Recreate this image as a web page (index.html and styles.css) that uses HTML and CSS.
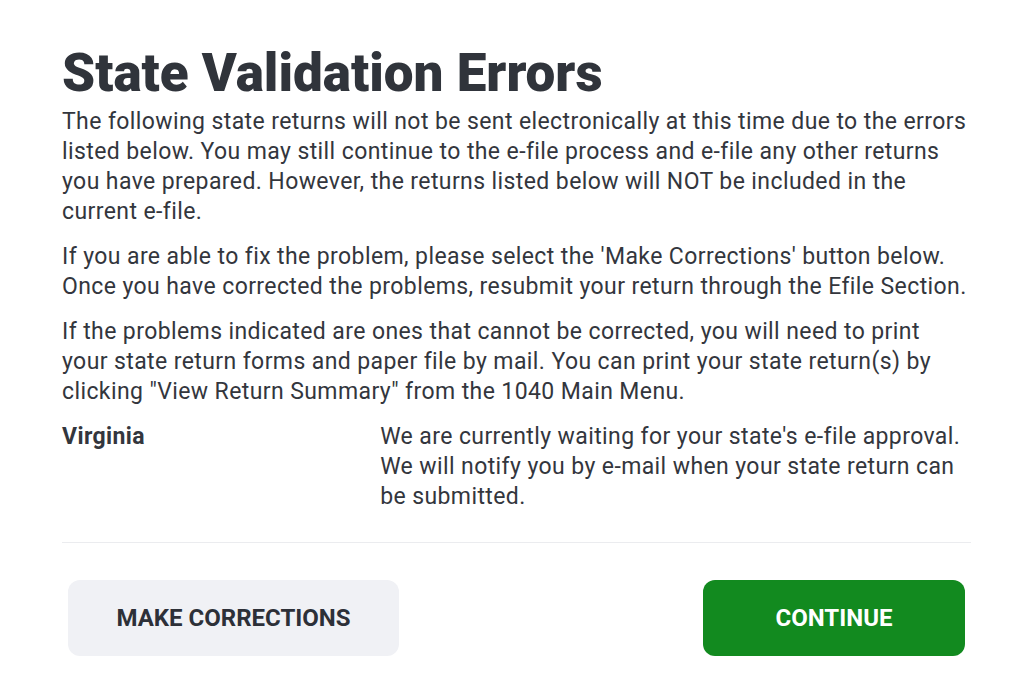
FILE: index.html
```html
<!DOCTYPE html>
<html lang="en">
<head>
    <meta charset="UTF-8">
    <meta name="viewport" content="width=device-width, initial-scale=1.0">
    <title>State Validation Errors</title>
    <link rel="stylesheet" href="styles.css">
</head>
<body>

    <div class="dialog">
        <h1 class="dialog-title">State Validation Errors</h1>

        <p>The following state returns will not be sent electronically at this time due to the errors listed below. You may still continue to the e-file process and e-file any other returns you have prepared. However, the returns listed below will NOT be included in the current e-file.</p>

        <p>If you are able to fix the problem, please select the 'Make Corrections' button below. Once you have corrected the problems, resubmit your return through the Efile Section.</p>

        <p>If the problems indicated are ones that cannot be corrected, you will need to print your state return forms and paper file by mail. You can print your state return(s) by clicking "View Return Summary" from the 1040 Main Menu.</p>

        <div class="state-list">
            <div class="state-name">Virginia</div>
            <div class="state-msg">We are currently waiting for your state's e-file approval. We will notify you by e-mail when your state return can be submitted.</div>
        </div>

        <div class="dialog-actions">
            <button class="btn btn-secondary">Make Corrections</button>
            <button class="btn btn-primary">Continue</button>
        </div>
    </div>

</body>
</html>
```

FILE: styles.css
```css
body {
    margin: 0;
    background: #fff;
    font-family: Roboto, "Liberation Sans", sans-serif;
    color: #33363d;
}

.dialog {
    padding: 40px 53px 0 62px;
}

.dialog-title {
    margin: 0;
    font-size: 53px;
    line-height: 67px;
    font-weight: 900;
    color: #30343b;
}

.dialog p {
    margin: 0 0 15px;
    font-size: 23px;
    line-height: 30px;
    letter-spacing: 0.4px;
}

/* Lista de estados */
.state-list {
    display: grid;
    grid-template-columns: 35% 65%;
    font-size: 23px;
    line-height: 30px;
    letter-spacing: 0.4px;
    padding-bottom: 30px;
    border-bottom: 1px solid #ebecef;
}

.state-name {
    font-weight: 700;
}

/* Botones */
.dialog-actions {
    display: flex;
    justify-content: space-between;
    padding: 37px 6px 0;
}

.btn {
    height: 76px;
    border: none;
    border-radius: 12px;
    font-family: inherit;
    font-size: 24px;
    font-weight: 700;
    text-transform: uppercase;
    cursor: pointer;
}

.btn-secondary {
    width: 331px;
    background-color: #f0f1f5;
    color: #2d3038;
}

.btn-primary {
    width: 262px;
    background-color: #128a1f;
    color: #fff;
}
```
